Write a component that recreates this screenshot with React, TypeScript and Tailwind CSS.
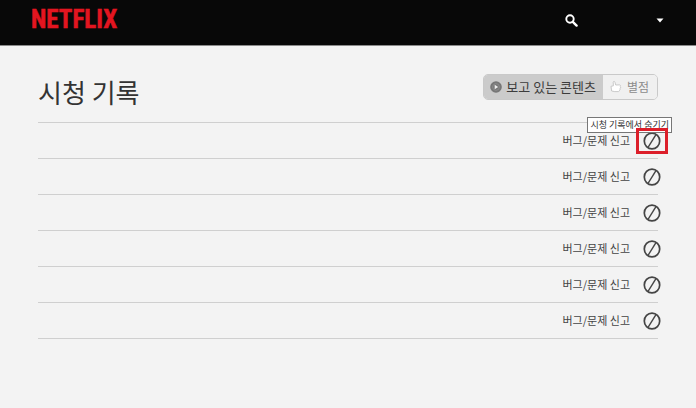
const rows = [1, 2, 3, 4, 5, 6];

function Logo() {
  return (
    <a href="#" aria-label="NETFLIX" className="block">
      <svg width="100" height="30" viewBox="0 0 100 30" className="block">
        <text
          x="1"
          y="23"
          className="fill-[#e31520] stroke-[#e31520] stroke-[0.5px] font-['Roboto_Condensed','Open_Sans_Condensed','Roboto',sans-serif] text-[25px] font-bold"
        >
          NETFLIX
        </text>
      </svg>
    </a>
  );
}

function HideIcon() {
  return (
    <svg width="20" height="20" viewBox="0 0 20 20" fill="none" stroke="#454545" className="block">
      <ellipse cx="10" cy="10" rx="7.7" ry="7.9" strokeWidth="1.7" />
      <path d="M6.2 16.2 13.8 3.8" strokeWidth="1.4" />
    </svg>
  );
}

export default function App() {
  return (
    <div className="min-h-screen bg-[#f3f3f3] font-['Noto_Sans_CJK_KR',sans-serif] text-[#333]">
      <header className="flex h-[46px] items-start justify-between border-b border-[#8a8a8a] bg-[#080808] pt-[5px] pr-8 pl-[30px]">
        <Logo />
        <div className="flex items-center gap-[78px] pt-[9px]">
          <button type="button" aria-label="검색">
            <svg width="13" height="13" viewBox="0 0 13 13" fill="none" stroke="#fff" className="block">
              <circle cx="5" cy="5" r="3.7" strokeWidth="1.9" />
              <path d="m7.8 7.8 3.8 3.8" strokeWidth="2.4" strokeLinecap="round" />
            </svg>
          </button>
          <button type="button" aria-label="메뉴">
            <svg width="8" height="5" viewBox="0 0 8 5" fill="#fff" className="block">
              <path d="M.5.5h7L4 4.5z" />
            </svg>
          </button>
        </div>
      </header>

      <main className="px-[38px] pt-7">
        <div className="flex h-12 items-start justify-between">
          <h1 className="text-[26px] leading-9 text-[#333]">시청 기록</h1>
          <div className="flex h-[26px] overflow-hidden rounded-[5px] border border-[#c9c9c9]">
            <button type="button" className="flex items-center gap-[3px] bg-[#cbcbcb] pr-[7px] pl-[5px] text-[13px] text-[#3c3c3c]">
              <svg width="14" height="14" viewBox="0 0 14 14" className="block">
                <circle cx="7" cy="7" r="5.8" fill="#777" />
                <circle cx="7" cy="7" r="3.4" fill="none" stroke="#8b8b8b" />
                <path d="M5.7 4.8 9.2 7 5.7 9.2z" fill="#eee" />
              </svg>
              보고 있는 콘텐츠
            </button>
            <button type="button" className="flex items-center gap-1 bg-[#f0f0f0] pr-2 pl-[6px] text-[12px] text-[#8c8c8c]">
              <svg width="14" height="14" viewBox="0 0 14 14" fill="#fff" stroke="#c4c4c4" strokeWidth=".9" strokeLinejoin="round" className="block">
                <path d="M2 6.3 4.4 5.8 4.2 2.2C4.4 1 5.8 1.2 6 2.4L6.7 5l3.8-.1c1.2.1 1.2 1.4.5 1.7 1 .4.8 1.6-.1 1.8.7.6.3 1.6-.5 1.7.3.8-.3 1.5-1.2 1.5H5.8L2.6 11z" />
              </svg>
              별점
            </button>
          </div>
        </div>

        <ul className="border-t border-[#cfcfcf]">
          {rows.map((row) => (
            <li key={row} className="h-9 border-b border-[#cfcfcf]">
              <div className="-mr-1 flex h-full items-center justify-end gap-3">
                <a href="#" className="text-[11px] text-[#444]">
                  버그/문제 신고
                </a>
                <div className="relative">
                  <button type="button" aria-label="시청 기록에서 숨기기" className="block">
                    <HideIcon />
                  </button>
                  {row === 1 && (
                    <>
                      <span
                        role="tooltip"
                        className="absolute -top-[14px] -right-[10px] flex h-4 items-center border border-[#777] bg-white px-[2px] text-[9px] whitespace-nowrap text-[#333]"
                      >
                        시청 기록에서 숨기기
                      </span>
                      <span className="pointer-events-none absolute -inset-x-[6px] -inset-y-[3px] border-[3px] border-[#dc1f2a]" />
                    </>
                  )}
                </div>
              </div>
            </li>
          ))}
        </ul>
      </main>
    </div>
  );
}
